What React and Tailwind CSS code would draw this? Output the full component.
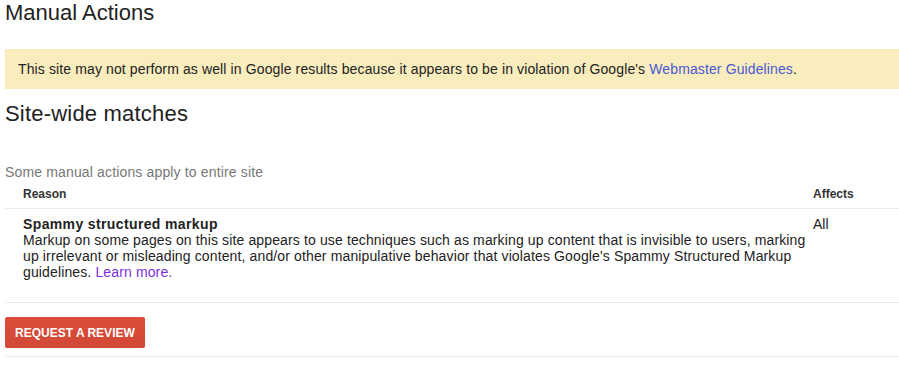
import React from "react";

const rows = [
  {
    title: "Spammy structured markup",
    text: "Markup on some pages on this site appears to use techniques such as marking up content that is invisible to users, marking up irrelevant or misleading content, and/or other manipulative behavior that violates Google's Spammy Structured Markup guidelines.",
    affects: "All",
  },
];

function App() {
  return (
    <div
      className="bg-white text-[#222] pl-[5px] w-[899px]"
      style={{ fontFamily: '"Liberation Sans", Arial, sans-serif' }}
    >
      <h1 className="text-[22px] leading-[24px] mt-[1px] font-normal">Manual Actions</h1>

      {/* warning banner */}
      <div className="mt-[24px] h-[40px] bg-[#f9edbe] flex items-center pl-[13px] text-[14px] tracking-[0.12px]">
        <p>
          This site may not perform as well in Google results because it appears to be in violation of Google's{" "}
          <a href="#" className="text-[#4a58d4]">Webmaster Guidelines</a>.
        </p>
      </div>

      <h2 className="text-[22px] leading-[24px] mt-[13px] font-normal tracking-[0.2px]">Site-wide matches</h2>

      <p className="mt-[38px] text-[14px] leading-[16px] text-[#777] tracking-[0.15px]">
        Some manual actions apply to entire site
      </p>

      <table className="w-full border-collapse">
        <thead>
          <tr className="border-b border-[#ebebeb]">
            <th className="text-left text-[12px] leading-[16px] font-bold text-[#333] pl-[18px] pt-[6px] pb-[6px]">
              Reason
            </th>
            <th className="text-left text-[12px] leading-[16px] font-bold text-[#333] w-[86px] pt-[6px] pb-[6px]">
              Affects
            </th>
          </tr>
        </thead>
        <tbody>
          {rows.map((row, i) => (
            <tr key={i} className="border-b border-[#ebebeb] align-top">
              <td className="pl-[18px] pr-[5px] pt-[7px] pb-[22px] text-[14px] leading-[16px] tracking-[0.13px]">
                <div className="font-bold tracking-[0.37px]">{row.title}</div>
                <div>
                  {row.text}{" "}
                  <a href="#" className="text-[#7b2fe0]">Learn more.</a>
                </div>
              </td>
              <td className="pt-[7px] text-[14px] leading-[16px]">{row.affects}</td>
            </tr>
          ))}
        </tbody>
      </table>

      <div className="pt-[14px] pb-[8px] border-b border-[#ebebeb]">
        <button className="h-[31px] px-[10px] rounded-[2px] bg-gradient-to-b from-[#dd4b39] to-[#d14836] text-white text-[12px] font-bold uppercase">
          Request a review
        </button>
      </div>
    </div>
  );
}

export default App;
